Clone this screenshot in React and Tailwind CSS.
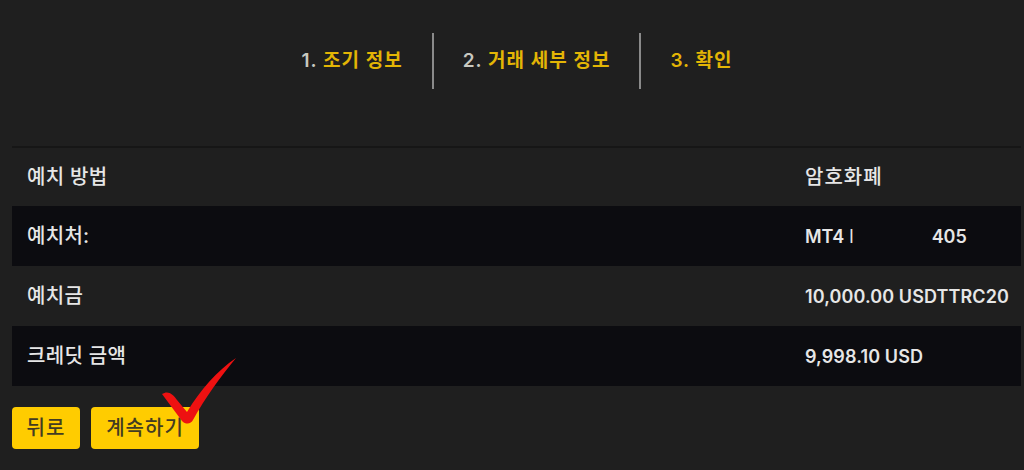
import React from "react";

const rows = [
  { label: "예치 방법", value: "암호화폐", dark: false, h: "h-[58px]" },
  { label: "예치처:", value: "mt4", dark: true, h: "h-[60px]" },
  { label: "예치금", value: "10,000.00 USDTTRC20", dark: false, h: "h-[60px]" },
  { label: "크레딧 금액", value: "9,998.10 USD", dark: true, h: "h-[60px]" },
];

function Step({ num, label, active }) {
  return (
    <div className="px-[29px] text-[19px] font-semibold tracking-[1px] text-[#e3b505]">
      <span className={active ? "text-[#e3b505]" : "text-[#c8c8c0]"}>{num}</span> {label}
    </div>
  );
}

export default function App() {
  return (
    <div
      className="relative h-[470px] w-[1024px] overflow-hidden bg-[#1f1f1f] text-[#e6e6e6]"
      style={{ fontFamily: 'Inter, "Noto Sans CJK KR", sans-serif' }}
    >
      <div className="flex h-[146px] items-start justify-center pt-[33px] pl-[10px]">
        <div className="flex h-[56px] items-center">
          <Step num="1." label="조기 정보" />
          <div className="h-[56px] w-[2px] bg-[#8a8a8a]" />
          <Step num="2." label="거래 세부 정보" />
          <div className="h-[56px] w-[2px] bg-[#8a8a8a]" />
          <Step num="3." label="확인" active />
        </div>
      </div>

      <div className="ml-[12px] w-[1009px] border-t-2 border-[#161616]">
        {rows.map((r) => (
          <div
            key={r.label}
            className={`flex ${r.h} items-center font-medium ${r.dark ? "bg-[#0c0c10]" : ""}`}
          >
            <div className="w-[793px] pl-[15px] text-[20px] tracking-[0.3px]">{r.label}</div>
            {r.value === "mt4" ? (
              <div className="flex items-center text-[18px] font-semibold">
                MT4 <span className="ml-[5px] font-normal">l</span>
                <span className="inline-block w-[78px]" />
                <span>405</span>
              </div>
            ) : r.value === "암호화폐" ? (
              <div className="text-[20px] tracking-[1px]">{r.value}</div>
            ) : (
              <div className="text-[18px] font-semibold tracking-[0.1px]">{r.value}</div>
            )}
          </div>
        ))}
      </div>

      <div className="ml-[12px] mt-[21px] flex gap-[11px]">
        <button className="h-[42px] w-[68px] rounded-[4px] bg-[#ffcc00] text-[20px] font-medium tracking-[1px] text-[#433c22]">
          뒤로
        </button>
        <button className="h-[42px] w-[108px] rounded-[4px] bg-[#ffcc00] text-[20px] font-medium tracking-[1px] text-[#433c22]">
          계속하기
        </button>
      </div>

      <svg
        className="absolute left-[160px] top-[354px]"
        width="80"
        height="72"
        viewBox="0 0 80 72"
      >
        <path
          d="M2 40 C8 36 13 40 17 46 L27 58 C41 35 57 17 76 4 C61 22 45 44 33 66 C31 70 26 71 22 67 Z"
          fill="#ee1111"
        />
      </svg>
    </div>
  );
}
